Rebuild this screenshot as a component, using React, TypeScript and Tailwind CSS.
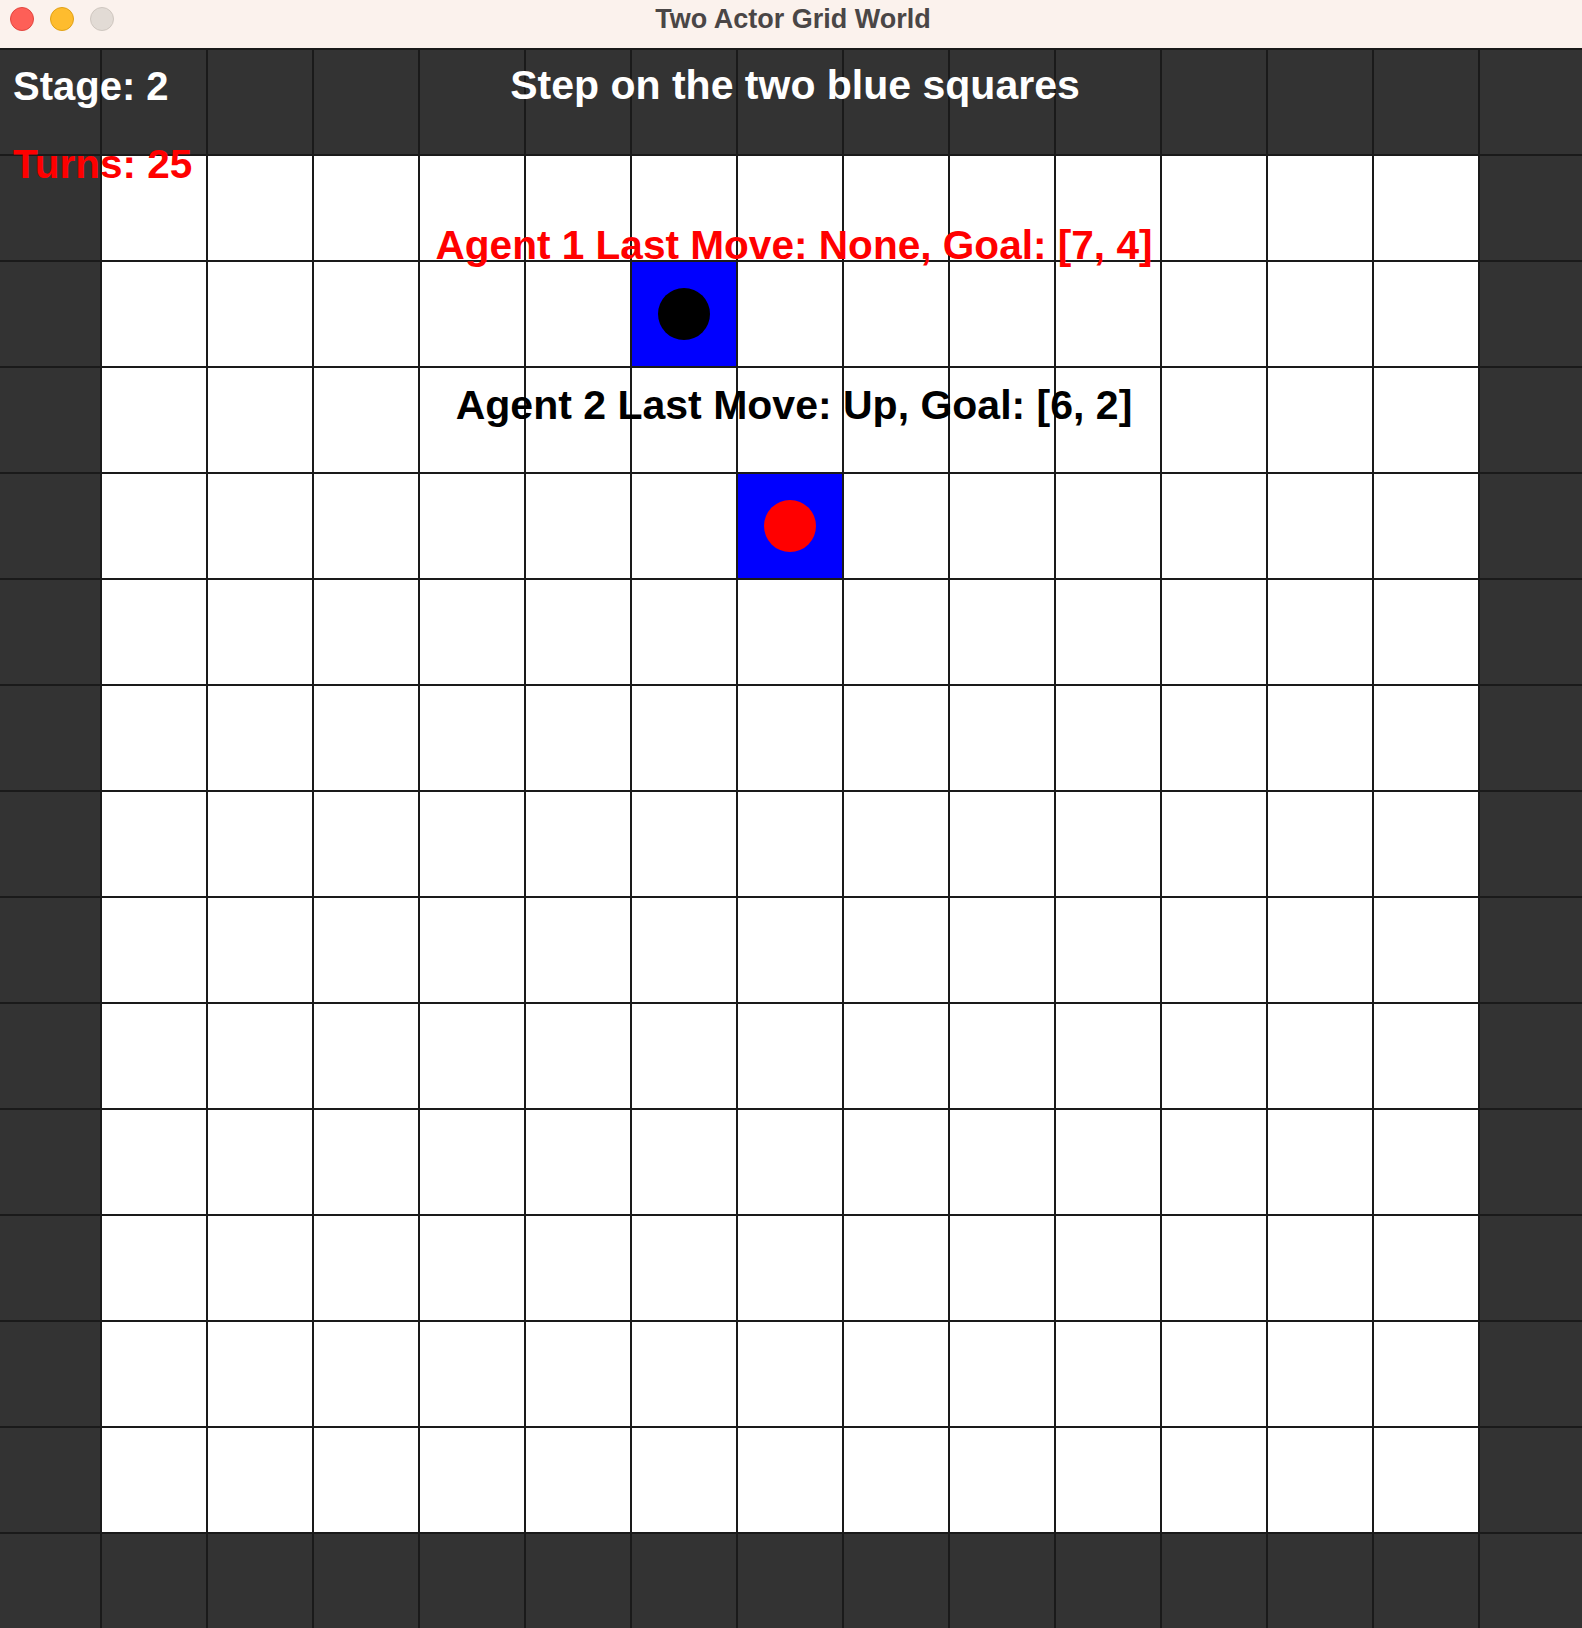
import React from "react";

const N = 15;

function Cell({ r, c }: { r: number; c: number }) {
  const dark = r === 0 || r === N - 1 || c === 0 || c === N - 1;
  const a1 = r === 2 && c === 6;
  const a2 = r === 4 && c === 7;
  if (a1 || a2) {
    return (
      <div className="bg-[#0000ff] flex items-center justify-center">
        <div className={"w-[52px] h-[52px] rounded-full " + (a1 ? "bg-black" : "bg-[#ff0000]")} />
      </div>
    );
  }
  return <div className={dark ? "bg-[#333333]" : "bg-white"} />;
}

export default function App() {
  const cells = [];
  for (let r = 0; r < N; r++) {
    for (let c = 0; c < N; c++) {
      cells.push(<Cell key={r + "-" + c} r={r} c={c} />);
    }
  }
  const font = { fontFamily: '"Liberation Sans", Arial, sans-serif' };
  return (
    <div className="w-[1582px] h-[1628px] overflow-hidden bg-[#333333]" style={font}>
      <div className="h-[48px] bg-[#fbf2ed] relative pt-[7px]">
        <div className="flex items-center gap-[16px] pl-[10px]">
          <div className="w-[24px] h-[24px] rounded-full bg-[#fe5f57] border border-[#e2463f]" />
          <div className="w-[24px] h-[24px] rounded-full bg-[#febc2e] border border-[#e1a116]" />
          <div className="w-[24px] h-[24px] rounded-full bg-[#e2dbd5] border border-[#cfc7c0]" />
        </div>
        <div className="absolute inset-x-0 top-[4px] h-[30px] flex items-center justify-center pl-[4px] text-[27px] font-bold text-[#4a4646]">
          Two Actor Grid World
        </div>
      </div>
      <div className="relative">
        <div className="grid grid-cols-[repeat(15,104px)] grid-rows-[repeat(15,104px)] gap-[2px] p-[2px] bg-[#1a1a1a] -ml-[6px] w-max">
          {cells}
        </div>
        <div className="absolute inset-x-0 top-0 flex flex-col font-bold whitespace-nowrap">
          <div className="relative h-[96px]">
            <div className="absolute left-[13px] top-[18px] text-[40px] leading-[40px] text-white">Stage: 2</div>
            <div className="absolute inset-x-0 top-[17px] pl-[8px] text-center text-[41px] leading-[41px] text-white">
              Step on the two blue squares
            </div>
          </div>
          <div className="pl-[13px] text-[40.5px] leading-[40px] text-[#ff0000]">Turns: 25</div>
          <div className="mt-[41px] pl-[6px] text-center text-[40.6px] leading-[41px] text-[#ff0000]">
            Agent 1 Last Move: None, Goal: [7, 4]
          </div>
          <div className="mt-[119px] pl-[6px] text-center text-[41px] leading-[41px] text-black">
            Agent 2 Last Move: Up, Goal: [6, 2]
          </div>
        </div>
      </div>
    </div>
  );
}
